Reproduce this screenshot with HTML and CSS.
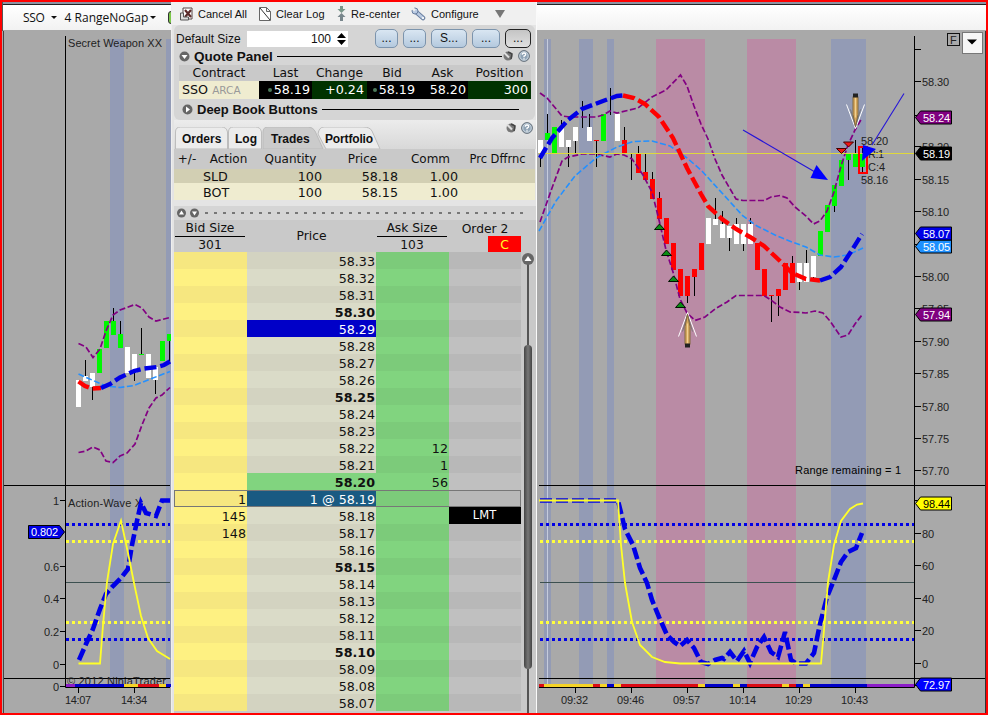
FILE: index.html
```
<!DOCTYPE html>
<html lang="en">
<head>
    <meta charset="UTF-8">
    <meta name="viewport" content="width=device-width, initial-scale=1.0">
    <title>SSO - 4 RangeNoGap</title>
    <link rel="stylesheet" href="styles.css">
</head>
<body>
    <div class="screen">

        <div class="chart left">
            <div class="chart-bar">
                <span class="grip"></span>
                <span class="sep"></span>
                <span class="symbol">SSO</span><i class="caret"></i>
                <span class="interval">4 RangeNoGap</span><i class="caret"></i>
                <span class="sep"></span>
                <span class="green-btn"></span>
            </div>
            <svg id="leftChart" viewBox="2 31 169 682" width="169" height="682"></svg>
        </div>

        <div class="panel">
            <div class="toolbar">
                <svg class="tb-icon" width="15" height="14" viewBox="0 0 15 14">
                    <path d="M4 1h9v11h-9z" fill="#fff" stroke="#554444"/>
                    <path d="M6 3l6 7M12 3l-6 7" stroke="#5b2a2a" stroke-width="2.2"/>
                    <path d="M1.500 6v7h8v-3h-5v-4z" fill="#ddd" stroke="#555"/>
                </svg>
                <span class="w-cancel">Cancel All</span>
                <svg class="tb-icon" width="12" height="14" viewBox="0 0 12 14">
                    <path d="M.5.5h7l4 4v9h-11zM7.500.5v4h4" fill="#fff" stroke="#666"/>
                    <path d="M1 1l10 12" stroke="#333"/>
                </svg>
                <span class="w-clear">Clear Log</span>
                <svg class="tb-icon" width="9" height="15" viewBox="0 0 9 15">
                    <path d="M3 0h3v3h2.500l-4 4-4-4h2.500z" fill="#78968a"/>
                    <path d="M4.500 7l4 4h-2.500v4h-3v-4h-2.500z" fill="#78868c"/>
                </svg>
                <span class="w-center">Re-center</span>
                <svg class="tb-icon" width="15" height="14" viewBox="0 0 15 14">
                    <path d="M4 4l8 7" stroke="#6a7fa0" stroke-width="4.500" stroke-linecap="round"/>
                    <path d="M4 4l8 7" stroke="#b9cae2" stroke-width="2.500" stroke-linecap="round"/>
                    <circle cx="4" cy="4" r="3" fill="#b9cae2" stroke="#6a7fa0"/>
                    <path d="M0 0l4 3.500" stroke="#efefef" stroke-width="2.500"/>
                    <circle cx="12" cy="11" r="1" fill="#fff"/>
                </svg>
                <span class="w-conf">Configure</span>
                <i class="more"></i>
            </div>

            <div class="group">
                <div class="size-row">
                    <span class="size-label">Default Size</span>
                    <span class="spin">100<svg width="9" height="12" viewBox="0 0 9 12"><path d="M4.500 0l4.500 5h-9zM0 7h9l-4.500 5z"/></svg></span>
                    <span class="btns">
                        <b>...</b><b>...</b><b class="wide">S...</b><b class="mid">...</b><b class="active">...</b>
                    </span>
                </div>
                <div class="title-row">
                    <svg class="disc" width="11" height="11" viewBox="0 0 11 11"><circle cx="5.500" cy="5.500" r="5" fill="#666"/><path d="M2.500 4h6l-3 4z" fill="#fff"/></svg>
                    <h2 class="w-quote">Quote Panel</h2>
                    <hr>
                    <svg class="tool" width="12" height="12" viewBox="0 0 12 12"><use href="#wrench"/></svg>
                    <svg class="tool" width="12" height="12" viewBox="0 0 12 12"><use href="#help"/></svg>
                </div>
                <div class="quote head">
                    <span>Contract</span><span>Last</span><span>Change</span><span>Bid</span><span>Ask</span><span>Position</span>
                </div>
                <div class="quote vals">
                    <span class="contract">SSO <small>ARCA</small></span>
                    <span><i></i>58.19</span><span class="up">+0.24</span><span><i></i>58.19</span><span>58.20</span><span class="up">300</span>
                </div>
                <div class="title-row deep">
                    <svg class="disc" width="11" height="11" viewBox="0 0 11 11"><circle cx="5.500" cy="5.500" r="5" fill="#666"/><path d="M4 2.500v6l4-3z" fill="#fff"/></svg>
                    <h2 class="w-deep">Deep Book Buttons</h2>
                    <hr>
                </div>
            </div>

            <div class="tabs">
                <svg class="tab-shapes" width="362" height="22" viewBox="0 0 362 22">
                    <path d="M1.500 22v-17q0-5 5-5h41q5 0 6 5v17z"/>
                    <path d="M54.500 22v-17q0-5 5-5h22q5 0 6 5v17z"/>
                    <path d="M152 22l-8-15q1-7 6-7h39q7 0 9 4l8 18z"/>
                    <path class="on" d="M89 22v-17q0-5 5-5h40q5 0 7 4l8 18z"/>
                </svg>
                <span class="t1">Orders</span><span class="t2">Log</span><span class="t3">Trades</span><span class="t4">Portfolio</span>
                <div class="tab-tools">
                    <svg width="12" height="12" viewBox="0 0 12 12"><use href="#wrench"/></svg>
                    <svg width="12" height="12" viewBox="0 0 12 12"><use href="#help"/></svg>
                </div>
            </div>
            <div class="trades thead">
                <span>+/-</span><span>Action</span><span>Quantity</span><span>Price</span><span>Comm</span><span class="diff">Prc Dffrnc</span>
            </div>
            <div class="trades sold">
                <span></span><span class="act">SLD</span><span>100</span><span>58.18</span><span>1.00</span><span></span>
            </div>
            <div class="trades bought">
                <span></span><span class="act">BOT</span><span>100</span><span>58.15</span><span>1.00</span><span></span>
            </div>
            <div class="splitter">
                <svg width="22" height="10" viewBox="0 0 22 10">
                    <circle cx="4.500" cy="5" r="4.500" fill="#666"/><path d="M2 6.500h5l-2.500-4z" fill="#fff"/>
                    <circle cx="17.500" cy="5" r="4.500" fill="#666"/><path d="M15 3.500h5l-2.500 4z" fill="#fff"/>
                </svg>
                <span class="dots"></span>
            </div>
            <div class="book-head">
                <div class="two"><span>Bid Size</span><span>301</span></div>
                <div class="one">Price</div>
                <div class="two"><span>Ask Size</span><span>103</span></div>
                <div class="order"><span>Order 2</span><b>C</b></div>
            </div>
            <div class="book">
                <div id="ladder" class="ladder"></div>
                <svg class="scroll" width="14" height="461" viewBox="0 0 14 461">
                    <defs><linearGradient id="thumb"><stop offset="0" stop-color="#444"/><stop offset=".5" stop-color="#777"/><stop offset="1" stop-color="#444"/></linearGradient></defs>
                    <rect x="6" y="12" width="2" height="449" fill="#555"/>
                    <circle cx="7" cy="7" r="6" fill="#666"/><path d="M3.500 9h7l-3.500-5z" fill="#fff"/>
                    <rect x="3" y="93" width="8" height="324" rx="4" fill="url(#thumb)"/>
                </svg>
            </div>
        </div>

        <div class="chart right">
            <div class="chart-bar"></div>
            <svg id="rightChart" viewBox="537 31 449 682" width="449" height="682"></svg>
        </div>
    </div>

    <!-- shared icons -->
    <svg class="defs" width="0" height="0">
        <symbol id="wrench" viewBox="0 0 12 12">
            <circle cx="6" cy="6" r="4.500" fill="#777"/>
            <path d="M2 2.500l5 5" stroke="#ddd" stroke-width="2"/>
            <path d="M6 2l4 2-1 5" stroke="#444" fill="none" stroke-width="1.500"/>
        </symbol>
        <symbol id="help" viewBox="0 0 12 12">
            <circle cx="6" cy="6" r="5.400" fill="#8fa3b5" stroke="#66707a"/>
            <circle cx="6" cy="6" r="4.200" fill="none" stroke="#dde6ee" stroke-width=".8"/>
            <path d="M4.300 4.700q0-1.700 1.700-1.700t1.700 1.500q0 1-1.700 1.700v1M6 8.200v1.200" stroke="#fff" fill="none" stroke-width="1.300"/>
        </symbol>
    </svg>

    <script>
        // ---- price ladder ----
        let bids = { "58.19": 1, "58.18": 145, "58.17": 148 };
        let asks = { "58.22": 12, "58.21": 1, "58.20": 56 };
        let rows = "";
        for (let p = 5833; p >= 5807; p--) {
            let price = (p / 100).toFixed(2);
            let cls = "row";
            if (p % 5 === 0) cls += " round";
            if (price === "58.29") cls += " high";
            if (price === "58.20") cls += " offer";
            if (price === "58.19") cls += " last";
            let label = price === "58.19" ? "1 @ " + price : price;
            let order = price === "58.18" ? '<span class="lmt">LMT</span>' : "<span></span>";
            rows += `<div class="${cls}"><span>${bids[price] || ""}</span><span>${label}</span><span>${asks[price] || ""}</span>${order}</div>`;
        }
        document.getElementById("ladder").innerHTML = rows;

        // ---- chart helpers ----
        function rect(x, y, w, h, fill) {
            return `<rect x="${x}" y="${y}" width="${w}" height="${h}" fill="${fill}"/>`;
        }
        function line(cls, pts) {
            return `<polyline class="${cls}" points="${pts}"/>`;
        }
        function text(x, y, str, len, cls) {
            return `<text x="${x}" y="${y}" textLength="${len}" class="${cls || ""}">${str}</text>`;
        }
        let colors = { w: "#ffffff", g: "#00f800", r: "#ff0000" };
        // candle: [x, color, body top, body bottom, wick top, wick bottom]
        function candles(list) {
            return list.map(c => {
                let s = "";
                if (c[4]) s += rect(c[0], c[4], 1, c[5] - c[4], "#000");
                if (c[1]) s += rect(c[0] - 2, c[2], 5, c[3] - c[2], colors[c[1]]);
                return s;
            }).join("");
        }
        function levels(x1, x2) {
            return line("axis", `${x1},485.5 ${x2},485.5`) + line("axis", `${x1},678.5 ${x2},678.5`);
        }
        function dotted(x1, x2) {
            return line("mid", `${x1},582.5 ${x2},582.5`)
                + line("dot blue", `${x1},524.5 ${x2},524.5`) + line("dot blue", `${x1},639.5 ${x2},639.5`)
                + line("dot yellow", `${x1},541.5 ${x2},541.5`) + line("dot yellow", `${x1},622.5 ${x2},622.5`);
        }
        function strip(list) {
            return list.map(s => rect(s[0], 684, s[1] - s[0], 3, s[2])).join("");
        }
        // price marker pointing left at the axis
        function tag(y, str, fill, color) {
            return `<path d="M915.500 ${y + .5}l5-6.500h31v13h-31z" fill="${fill}" stroke="#000"/>`
                + `<text x="923" y="${y + 4.5}" textLength="27" fill="${color}" class="tagtext">${str}</text>`;
        }

        let blue = "#939bb5", pink = "#ba8ba5", Y = "#f5d327", B = "#0000c8", R = "#dc0a14", P = "#8c1ec8";

        // ---- left chart ----
        let s = rect(3, 31, 1, 682, "#444");
        s += rect(110, 39, 14, 645, blue) + rect(166, 39, 5, 645, blue);
        s += levels(4, 170) + dotted(66, 170);
        s += text(68, 47, "Secret Weapon XX", 94) + text(68, 507, "Action-Wave X", 74);
        s += candles([
            [78, "w", 380, 407], [85, "w", 376, 381, 360, 381], [92, "w", 373, 387, 373, 400], [99, "g", 349, 373],
            [106, "g", 321, 348], [113, "g", 321, 335, 308, 321], [120, "g", 334, 348, 321, 334], [127, "w", 347, 373],
            [134, "w", 354, 373, 373, 381], [141, "g", 354, 355, 328, 354], [148, "w", 354, 378], [155, "w", 367, 380, 380, 394],
            [162, "g", 341, 361], [169, "g", 334, 341, 341, 361]
        ]);
        s += line("band", "78.5,343.5 86,347 93,357.5 100,349 106,331 113,315 120,310 135,304.5 142,308 149,317 156,321 170,317.5");
        s += line("band", "78.5,452.5 86,451 93,447 100,450 106,461 113,462.5 120,456 127,453 135,444 142,425 149,408 156,398 162,395 170,387.5");
        s += line("avg", "78.5,374 92,380 106,386 120,387.5 134,385.5 148,380 162,374.5 170,371.5");
        s += line("trend red", "78.5,381.5 85,386 92,388.5 101,388");
        s += line("trend blue", "101,388 110,384 120,377.5 134,371 144,368.5 157,367 164,365 170,361.5");
        s += line("wave", "79,660 86,644 93,629 100,609 106,594 113,586 121,578 128,569 132,545 137,521 141,503 146,513 156,516 162,500.5 170,500.5");
        s += line("fast", "78.5,663.5 100,663.5 103,625 107,582 113,544 121,520.5 128,553 134,583 141,616 148,638 157,651 170,659");
        s += text(67, 685, "© 2012 NinjaTrader", 99);
        s += strip([[66, 75, P], [75, 124, B], [124, 138, Y], [138, 159, R], [159, 166, Y], [166, 171, B]]);
        s += line("axis", "65.5,36 65.5,687.5 170,687.5");
        [[500, "1", 6], [566, "0.6", 15], [598, "0.4", 15], [631, "0.2", 15], [664, "0", 6], [686, "0", 6]].forEach(t => {
            s += rect(60, t[0], 6, 1, "#000") + text(59 - t[2], t[0] + 4.5, t[1], t[2]);
        });
        s += `<path d="M64.500 532l-5-6.500h-31v13h31z" fill="#0000e6" stroke="#000"/><text x="31" y="536" textLength="27" fill="#fff" class="tagtext">0.802</text>`;
        s += rect(78, 688, 1, 5, "#000") + rect(134, 688, 1, 5, "#000");
        s += text(65, 704, "14:07", 26) + text(121, 704, "14:34", 26);
        document.getElementById("leftChart").innerHTML = s;

        // ---- right chart ----
        s = rect(985, 31, 1, 682, "#333");
        s += rect(544, 39, 7, 645, blue) + rect(547, 39, 1, 645, "#c5cbdc") + rect(579, 39, 14, 645, blue) + rect(607, 39, 7, 645, blue);
        s += rect(656, 39, 49, 645, pink) + rect(747, 39, 49, 645, pink) + rect(831, 39, 35, 645, blue);
        s += levels(539, 985) + dotted(540, 914);
        s += text(861, 145, "58.20", 27) + text(868, 158, "R:1", 16) + text(868, 171, "C:4", 17) + text(861, 184, "58.16", 27);
        s += candles([
            [540, "w", 140, 153, 153, 167], [547, "g", 133, 140, 114, 133], [554, "g", 127, 153], [561, "w", 127, 147, 120, 127],
            [568, "w", 140, 147, 147, 167], [575, "w", 127, 141, 141, 153], [582, "", 0, 0, 101, 128], [589, "w", 127, 141, 114, 127],
            [596, "r", 140, 141, 141, 167], [603, "g", 114, 141], [610, "", 0, 0, 88, 115], [617, "w", 114, 141],
            [624, "r", 140, 153, 127, 140], [631, "", 0, 0, 153, 180], [638, "r", 154, 173, 146, 154], [645, "r", 172, 180, 153, 172],
            [652, "r", 179, 199, 172, 179], [659, "r", 198, 219, 192, 198], [666, "r", 218, 244], [673, "r", 243, 270],
            [680, "r", 269, 296], [687, "r", 276, 296, 296, 303], [694, "r", 269, 277, 277, 296], [701, "r", 243, 270],
            [708, "w", 218, 244], [715, "w", 219, 225, 198, 219], [722, "w", 224, 238, 211, 224], [729, "w", 226, 238, 238, 251],
            [736, "w", 224, 244, 218, 224], [743, "w", 224, 244, 244, 251], [750, "w", 224, 244, 218, 224], [757, "r", 243, 270],
            [764, "r", 269, 296], [771, "r", 295, 296, 296, 322], [778, "r", 289, 296, 296, 316], [785, "r", 263, 290],
            [792, "r", 263, 283, 256, 263], [799, "w", 263, 282, 282, 290], [806, "w", 263, 282, 250, 263], [813, "w", 256, 277, 277, 280],
            [820, "g", 231, 256], [827, "g", 205, 232], [834, "g", 185, 206, 206, 212], [841, "g", 160, 186],
            [848, "g", 153, 160, 160, 180], [855, "g", 153, 167, 140, 153], [862, "g", 153, 167, 147, 173]
        ]);
        s += line("band", "540,93 547,98 562,116 570,117 596,117 603,115 610,111 617,113 638,108 652,97 666,90 680.5,75 687,86 694,106 701,124 708,139 715,159 722,175 729,187 736,199 743,200.5 764,200.5 771,197 780,195.5 787,198 795,207 806,216 813.5,224 820,221 827,211 834,192 841,166 848,145 855,130 862,118");
        s += line("band", "540,222 552,188 562,161 568,157 582,154 596,154 610,157 617,154 624,155 632,159 643,175 652,192 659,220 666,250 673,272 680,299 687,313 695,320.5 705,317 715,309 727,302 736,295.5 764,295.5 771,300 780,307 790,312 800,312.5 806,313 815,311 823,313 830,321 841,337 848,335 855,324 862,315");
        s += line("avg", "539,231 556,201 575,176 596,158 617,147 633,141.5 652,141 670,146 687,158 701,170 722,193 743,216 757,226 775,235 792,242 806,247 820,255 834,257 848,255 863,248");
        s += rect(539, 153, 376, 1, "#dfd83c");
        s += line("trend blue", "540,158 552,138 568,120 582,109 603,101 617,96 623,95.5");
        s += line("trend red", "623,95.5 634,98 645,104 659,117 673,138 687,168 701,194 708,206 722,219 736,229 750,237 764,246 780,261 792,273 806,279 820,280.5");
        s += line("trend blue", "820,280.5 830,277 841,267 852,250 862,234");
        // entry / exit marks
        [[659, 224], [666, 250], [673, 276], [680, 302]].forEach(m => {
            s += `<path d="M${m[0] + .5} ${m[1]}l5 5.500h-10z" fill="#0a8c14" stroke="#001000"/>`;
        });
        [[841, 148.5], [848, 142]].forEach(m => {
            s += `<path d="M${m[0] - 4.5} ${m[1]}h10l-5 5z" fill="#f01414" stroke="#400"/>`;
        });
        s += `<rect x="859" y="147" width="8" height="26" fill="none" stroke="#ff0000" stroke-width="2"/>`;
        // pencil pointers, the second one is flipped
        let pencil = `<path d="M-9 25l9-24 9 24" fill="none" stroke="#fff"/><path d="M-5 20l5-17 5 17" fill="none" stroke="#777"/><path d="M0 3l2.500 12v18h-5v-18z" fill="#d4a65e" stroke="#80683c"/><path d="M0 12v20" stroke="#f0d190"/><rect x="-2.500" y="32" width="5" height="4" fill="#222"/>`;
        s += `<g transform="translate(687.5 311.500)">${pencil}</g><g transform="translate(855.5 129.500) scale(1 -1)">${pencil}</g>`;
        // drawn arrows
        s += line("arrow", "743,130 815,172") + line("arrow", "904,93.5 872,145");
        s += `<path d="M828 180l-11.500-15-6 13z" fill="#0000ff"/><path d="M862 161l14-12-13-4z" fill="#0000ff"/>`;
        s += line("wave", "540,500.5 618,500.5 625,529 633,545 640,568 647,583 652,600 659,617 667,635 674,642 680,646 687,640 694,648 701,662 708,664 715,660 722,658 724,659 730,652 737,661 744,651 750,663 757,647 764,637 771,652 778,657 785,632 791,660 796,663.5 806,663.5 814,653 820,624 827,597 834,580 841,562 848,552 856,548 862,533");
        s += line("fast", "539,500.5 618,500.5 621,545 625,583 632,622 640,645 652,657 665,662 680,663.5 821,663.5 824,630 828,582 834,545 841,521 850,509 857,504.5 863,503.5");
        s += text(795, 474, "Range remaining = 1", 106, "black");
        s += strip([[539, 544, R], [544, 593, Y], [593, 600, R], [600, 607, Y], [607, 614, B], [614, 621, Y], [621, 698, R], [698, 705, Y],
            [705, 733, B], [733, 740, Y], [740, 747, B], [747, 782, R], [782, 789, Y], [789, 796, R], [796, 803, B], [803, 810, Y], [810, 867, B], [867, 914, P]]);
        s += line("axis", "539,687.5 914.5,687.5 914.5,36");
        [[49, ""], [81, "58.30"], [115, ""], [146, "58.20"], [179, "58.15"], [211, "58.10"], [244, ""], [276, "58.00"], [308, "57.95"], [341, "57.90"],
         [373, "57.85"], [406, "57.80"], [438, "57.75"], [470, "57.70"], [500, ""], [533, "80"], [565, "60"], [598, "40"], [630, "20"], [663, "0"], [685, ""]].forEach(t => {
            s += rect(915, t[0], 6, 1, "#000");
            if (t[1]) s += text(922, t[0] + 4.5, t[1], t[1].length === 5 ? 27 : t[1].length * 6);
        });
        s += tag(117, "58.24", "#800080", "#fff") + tag(153, "58.19", "#000", "#fff") + tag(246, "58.05", "#1e90ff", "#fff")
            + tag(233, "58.07", "#0000e6", "#fff") + tag(314, "57.94", "#800080", "#fff") + tag(503, "98.44", "#ffff00", "#000") + tag(684, "72.97", "#0000ff", "#fff");
        [[575, "09:32"], [631, "09:46"], [687, "09:57"], [743, "10:14"], [799, "10:29"], [855, "10:43"]].forEach(t => {
            s += rect(t[0], 688, 1, 5, "#000") + text(t[0] - 14, 704, t[1], 27);
        });
        s += `<rect x="947.5" y="33.500" width="12" height="12" fill="none" stroke="#111"/>` + text(950, 44, "F", 7);
        s += `<rect x="962.5" y="32.500" width="20" height="21" fill="#f6f6f6" stroke="#777"/><path d="M967 39.500h10l-5 5z" fill="#000"/>`;
        document.getElementById("rightChart").innerHTML = s;
    </script>
</body>
</html>
```
FILE: styles.css
```
* {
    box-sizing: border-box;
}
body {
    margin: 0;
    overflow: hidden;
    font-family: "Liberation Sans", Arial, sans-serif;
    color: #111;
}
.screen {
    display: flex;
    width: 988px;
    height: 715px;
    border: 2px solid #ff0000;
    background: #a9a9a9;
    overflow: hidden;
}
.defs {
    display: block;
}

/* charts */
.chart {
    flex: none;
    height: 711px;
    overflow: hidden;
}
.chart.left {
    width: 169px;
}
.chart.right {
    width: 449px;
}
.chart svg {
    display: block;
}
.chart-bar {
    display: flex;
    align-items: center;
    height: 29px;
    padding: 3px 0 1px 5px;
    background: linear-gradient(#8d93a3 0 2px, #222 2px 3px, #fff 3px, #f2f2f2 28px, #a9a9a9 28px);
    font-family: "Open Sans", sans-serif;
    font-size: 12px;
    white-space: nowrap;
}
.left .chart-bar {
    border-left: 1px solid #555;
    padding-left: 4px;
}
.grip {
    width: 2px;
    height: 15px;
    background: repeating-linear-gradient(#aaa 0 2px, transparent 2px 4px);
}
.sep {
    width: 1px;
    height: 15px;
    margin: 0 7px;
    background: #bbb;
}
.grip + .sep {
    margin-right: 8px;
    margin-left: 8px;
}
.symbol {
    width: 22px;
    letter-spacing: -0.3px;
}
.interval {
    width: 80px;
}
.caret {
    margin: 0 8px 0 6px;
    border: 3px solid transparent;
    border-top-color: #111;
    border-bottom: 0;
}
.interval + .caret {
    margin-right: 0;
    margin-left: 5px;
}
.green-btn {
    flex: none;
    width: 8px;
    height: 13px;
    margin-left: -2px;
    border: 1px solid #333;
    border-radius: 3px;
    background: #7cc84a;
}
.chart text {
    font-size: 11px;
    fill: #222;
}
.chart text.black {
    fill: #000;
}
.chart text.tagtext[fill="#fff"] {
    fill: #fff;
}
.chart text.tagtext[fill="#000"] {
    fill: #000;
}
polyline {
    fill: none;
}
.axis {
    stroke: #000;
}
.mid {
    stroke: #3c5050;
}
.dot {
    stroke-width: 3;
    stroke-dasharray: 3 3;
}
.band {
    stroke: #820082;
    stroke-width: 1.7;
    stroke-dasharray: 6 2.5;
}
.avg {
    stroke: #2490ff;
    stroke-width: 1.6;
    stroke-dasharray: 6 2.5;
}
.trend {
    stroke-width: 4.4;
    stroke-dasharray: 12 4;
}
.blue {
    stroke: #0000e6;
}
.red {
    stroke: #ff0000;
}
.dot.yellow {
    stroke: #ffff3c;
}
.wave {
    stroke: #0000e6;
    stroke-width: 4.6;
    stroke-dasharray: 12 4;
}
.fast {
    stroke: #ffff28;
    stroke-width: 1.8;
}
.arrow {
    stroke: #2414d8;
    stroke-width: 1.1;
}

/* order panel */
.panel {
    flex: none;
    display: flex;
    flex-direction: column;
    width: 366px;
    height: 711px;
    padding: 0 0 0 2px;
    border-left: 1px solid #eee;
    border-right: 1px solid #fafafa;
    background: #e4e4e4;
    font-family: "DejaVu Sans", Verdana, sans-serif;
    font-size: 12.7px;
    white-space: nowrap;
    overflow: hidden;
}
.panel > div {
    flex: none;
}
.toolbar {
    display: flex;
    align-items: center;
    height: 23px;
    margin-left: -2px;
    padding-left: 7px;
    background: #f0f0f0;
    font: 11px "Liberation Sans", Arial, sans-serif;
}
.tb-icon {
    flex: none;
    margin-right: 5px;
}
.toolbar .tb-icon:first-child {
    margin-right: 4px;
}
.w-cancel {
    width: 61px;
}
.w-clear {
    width: 61px;
    letter-spacing: 0.1px;
}
.w-center {
    width: 60px;
    letter-spacing: 0.1px;
}
.w-conf {
    width: 64px;
}
.more {
    border: 5px solid transparent;
    border-top: 8px solid #777;
    border-bottom: 0;
}
.group {
    height: 95px;
    border-radius: 6px;
    background: #d5d5d5;
    margin-right: 1px;
}
.size-row {
    display: flex;
    align-items: center;
    height: 24px;
    padding: 3px 4px 0 2px;
    font: 12px "Liberation Sans", Arial, sans-serif;
}
.size-label {
    width: 71px;
}
.spin {
    display: flex;
    align-items: center;
    justify-content: flex-end;
    gap: 6px;
    width: 101px;
    height: 16px;
    padding-right: 2px;
    background: #fff;
}
.btns {
    display: flex;
    gap: 5px;
    margin-left: auto;
}
.btns b {
    width: 23px;
    height: 19px;
    border: 1px solid #7c94ad;
    border-radius: 5px;
    background: linear-gradient(#d9e6f2, #b4c9de);
    font-weight: normal;
    line-height: 17px;
    text-align: center;
}
.btns .wide {
    width: 36px;
}
.btns .mid {
    width: 28px;
}
.btns .active {
    width: 26px;
    border: 1.500px solid #222;
    background: linear-gradient(#c4c4c4, #e0e0e0);
}
.title-row {
    display: flex;
    align-items: center;
    height: 14px;
    margin-bottom: 2px;
    padding-left: 5px;
    padding-right: 5px;
}
.title-row h2 {
    margin: 0 4px 0 4px;
    font: bold 13.500px "Liberation Sans", Arial, sans-serif;
}
.title-row hr {
    flex: 1;
    height: 1px;
    margin: 0;
    border: 0;
    background: #000;
}
.title-row h2.w-deep {
    font-size: 13px;
}
.title-row .tool {
    margin-left: 4px;
}
.title-row hr + .tool {
    margin-left: 0;
}
.title-row.deep {
    height: 23px;
    margin-bottom: 0;
    padding-left: 8px;
    padding-right: 16px;
}
.quote {
    display: grid;
    grid-template-columns: 80px 53px 55px 50px 51px 63px;
    margin-left: 5px;
    width: 352px;
}
.quote.head {
    height: 16px;
    background: #c9c9c9;
    line-height: 17px;
    text-align: center;
    font-size: 12.3px;
}
.quote.vals {
    height: 17px;
    line-height: 18px;
    color: #fff;
    text-align: right;
}
.quote.vals span {
    padding-right: 2px;
    background: #000;
}
.quote.vals .up {
    padding-right: 3px;
    background: #003200;
}
.quote.vals .contract {
    padding-left: 3px;
    background: #efecd0;
    color: #111;
    text-align: left;
}
.quote.vals small {
    color: #999;
    font-size: 10.5px;
}
.quote i {
    display: inline-block;
    width: 4px;
    height: 4px;
    margin: 0 2px 2px 0;
    border-radius: 50%;
    background: #4c7a5c;
}
.tabs {
    position: relative;
    display: flex;
    height: 29px;
    padding-top: 8px;
    font: bold 12px/22px "Liberation Sans", Arial, sans-serif;
    background: linear-gradient(#ececec, #d8d8d8);
}
.tab-shapes {
    position: absolute;
    left: 0;
    top: 7px;
}
.tab-shapes path {
    fill: #ececec;
    stroke: #bdbdbd;
}
.tab-shapes .on {
    fill: #cbcbcb;
    stroke: #bbb;
}
.tabs span {
    position: relative;
}
.t1 {
    width: 53px;
    padding-left: 8px;
}
.t2 {
    width: 36px;
    padding-left: 8px;
}
.t3 {
    width: 54px;
    padding-left: 8px;
}
.t4 {
    width: 80px;
    padding-left: 8px;
    letter-spacing: -0.15px;
}
.tab-tools {
    position: relative;
    display: flex;
    gap: 4px;
    margin: -6px 3px 0 auto;
}
.trades {
    display: grid;
    grid-template-columns: 27px 56px 68px 76px 60px 74px;
    text-align: right;
    width: 361px;
}
.trades.thead {
    height: 20px;
    background: #c9c9c9;
    line-height: 20px;
    text-align: center;
    font-size: 12px;
}
.trades .diff {
    font-size: 11.500px;
}
.trades span {
    padding-right: 3px;
}
.trades.thead span {
    padding: 0 1px 0 0;
}
.trades .act {
    padding-left: 2px;
    text-align: left;
}
.sold {
    height: 14px;
    background: #d2cfb3;
    line-height: 15px;
}
.bought {
    height: 17px;
    background: #efecd0;
    line-height: 19px;
}
.splitter {
    display: flex;
    align-items: center;
    gap: 6px;
    height: 14px;
    margin-top: 6px;
    padding-left: 3px;
    background: #d5d5d5;
}
.dots {
    width: 319px;
    height: 2px;
    background: repeating-linear-gradient(90deg, #777 0 3px, transparent 3px 9px);
}
.book-head {
    display: grid;
    grid-template-columns: 73px 129px 73px 86px;
    height: 32px;
    background: #c9c9c9;
    font-size: 12.3px;
    text-align: center;
}
.two {
    display: flex;
    flex-direction: column;
}
.two span {
    height: 16px;
    line-height: 16px;
}
.two span:first-child {
    width: 70px;
    height: 17px;
    border-bottom: 1px solid #000;
}
.two span:last-child {
    width: 70px;
}
.two {
    padding-left: 1px;
}
.one {
    line-height: 33px;
}
.order {
    width: 72px;
    line-height: 19px;
}
.order span {
    display: block;
    height: 16px;
}
.order b {
    display: block;
    width: 33px;
    height: 16px;
    margin-left: auto;
    background: #ff0000;
    color: #ffff28;
    font-weight: normal;
}
.book {
    display: flex;
    height: 461px;
    background: #c9c9c9;
}
.ladder {
    width: 347px;
    height: 461px;
    overflow: hidden;
}
.row {
    display: grid;
    grid-template-columns: 73px 129px 73px 72px;
    height: 17px;
    line-height: 19px;
    text-align: right;
}
.row span {
    padding-right: 1px;
    height: 17px;
}
.row span:nth-child(1) {
    background: #fef182;
}
.row span:nth-child(2) {
    background: #dadbc8;
}
.row span:nth-child(3) {
    background: #81d47f;
}
.row span:nth-child(4) {
    background: #c0c0c0;
}
.row:nth-child(odd) span:nth-child(1) {
    background: #f6e780;
}
.row:nth-child(odd) span:nth-child(2) {
    background: #d3d3c1;
}
.row:nth-child(odd) span:nth-child(3) {
    background: #7ccb7a;
}
.row:nth-child(odd) span:nth-child(4) {
    background: #b8b8b8;
}
.round span:nth-child(2) {
    font-weight: bold;
}
.ladder .high span:nth-child(2) {
    background: #0000c8;
    color: #fff;
}
.ladder .offer span:nth-child(2) {
    background: #81d47f;
}
.ladder .last span:nth-child(2) {
    background: #195a82;
    color: #fff;
}
.ladder .last {
    outline: 1px solid #777;
    outline-offset: -1px;
}
.ladder .row .lmt {
    background: #000;
    color: #fff;
    font-size: 11.500px;
    line-height: 17px;
    text-align: center;
}
```
